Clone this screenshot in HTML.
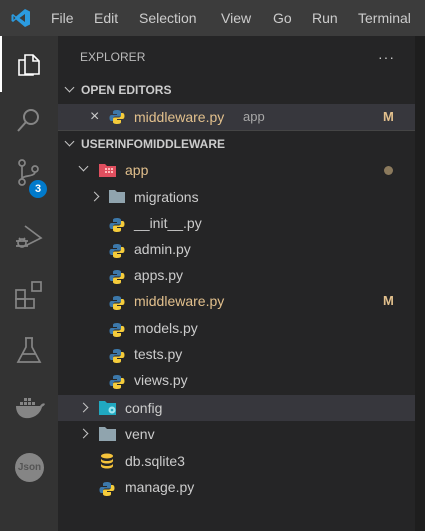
<!DOCTYPE html>
<html><head><meta charset="utf-8"><style>
*{margin:0;padding:0;box-sizing:border-box}
body{width:425px;height:531px;background:#1e1e1e;font-family:"Liberation Sans",sans-serif;overflow:hidden;position:relative;color:#ccc}
#title{position:absolute;left:0;top:0;width:425px;height:36px;background:#3c3c3c}
#title span{position:absolute;top:10px;font-size:14px;color:#cccccc}
#act{position:absolute;left:0;top:36px;width:58px;height:495px;background:#333333}
#side{position:absolute;left:58px;top:36px;width:357px;height:495px;background:#252526}
.row{position:absolute;left:58px;width:357px;height:26px;font-size:14px;line-height:26px;white-space:nowrap}
.hdr{font-size:12px;font-weight:bold;color:#cccccc}
.sel{background:#37373d}
.mod{color:#e2c08d}
.ic{position:absolute;top:5px}
.chev{position:absolute;top:8px;width:7px;height:7px;border-right:1.5px solid #c5c5c5;border-bottom:1.5px solid #c5c5c5}
.down{transform:rotate(45deg)}
.right{transform:rotate(-45deg)}
.badgeM{position:absolute;left:325px;font-weight:bold;color:#e2c08d;font-size:13px}
.t{position:absolute}
svg.act{position:absolute;left:15px}
</style></head><body>
<div id="title">
<svg style="position:absolute;left:11px;top:8px" width="20" height="20" viewBox="0 0 20 20"><path d="M14 1 L19 3.5 V16.5 L14 19 L5 11.5 L2 14 L0.5 13 V7 L2 6 L5 8.5 Z M14 6 L8.5 10 L14 14 Z M2.5 8 V12 L4.5 10 Z" fill="#2b9be0" fill-rule="evenodd"/></svg>
<span style="left:51px">File</span><span style="left:94px">Edit</span><span style="left:139px">Selection</span><span style="left:221px">View</span><span style="left:273px">Go</span><span style="left:312px">Run</span><span style="left:358px">Terminal</span>
</div>
<div id="act">
<div style="position:absolute;left:0;top:0;width:2px;height:56px;background:#fff"></div>
<svg class="act" style="top:14px" width="28" height="28" viewBox="0 0 28 28" fill="none" stroke="#fff" stroke-width="1.6"><path d="M10 5h8l6 6v13H10z"/><path d="M18 5v6h6"/><path d="M10 10H4v15h14v-1"/></svg>
<svg class="act" style="top:70px" width="28" height="28" viewBox="0 0 28 28" fill="none" stroke="#858585" stroke-width="2"><circle cx="16" cy="11" r="7"/><path d="M11 16L3 25"/></svg>
<svg class="act" style="top:122px" width="28" height="30" viewBox="0 0 28 30" fill="none" stroke="#858585" stroke-width="1.7"><circle cx="7" cy="5" r="3"/><circle cx="7" cy="24" r="3"/><circle cx="20" cy="11" r="3"/><path d="M7 8v13M20 14c0 5-13 3-13 7"/></svg>
<div style="position:absolute;left:29px;top:144px;width:18px;height:18px;border-radius:9px;background:#007acc;color:#fff;font-size:11px;font-weight:bold;text-align:center;line-height:18px">3</div>
<svg class="act" style="top:186px" width="30" height="30" viewBox="0 0 30 30" fill="none" stroke="#858585" stroke-width="1.7"><path d="M10 4l16 12-16 8"/><circle cx="7" cy="21" r="4"/><path d="M1 19h12M1 24h12M4 16l2 2M10 16l-2 2"/></svg>
<svg class="act" style="top:244px" width="30" height="30" viewBox="0 0 30 30" fill="none" stroke="#858585" stroke-width="1.7"><rect x="1" y="10" width="9" height="9"/><rect x="1" y="19" width="9" height="9"/><rect x="10" y="19" width="9" height="9"/><rect x="17" y="2" width="9" height="9"/></svg>
<svg class="act" style="top:300px" width="28" height="28" viewBox="0 0 28 28" fill="none" stroke="#858585" stroke-width="1.7"><path d="M10 2h8M11 2v9L3 26h22L17 11V2M7 18h14"/></svg>
<svg class="act" style="top:360px" width="30" height="24" viewBox="0 0 30 24"><path d="M1 10h24c2-3 4-3 5-2-1 2-2 2-3 3-2 8-10 12-17 11C4 21 1 16 1 10z" fill="#858585"/><g fill="#858585"><rect x="5" y="6" width="3" height="3"/><rect x="9" y="6" width="3" height="3"/><rect x="13" y="6" width="3" height="3"/><rect x="9" y="2" width="3" height="3"/><rect x="13" y="2" width="3" height="3"/><rect x="17" y="6" width="3" height="3"/></g></svg>
<div style="position:absolute;left:15px;top:417px;width:29px;height:29px;border-radius:50%;background:#858585;color:#555;font-size:10px;font-weight:bold;text-align:center;line-height:29px">Json</div>
</div>
<div id="side">
<div style="position:absolute;left:22px;top:14px;font-size:12px;color:#bbbbbb">EXPLORER</div>
<div style="position:absolute;left:320px;top:16px;font-size:14px;color:#ccc;letter-spacing:1px;line-height:10px">···</div>
</div>

<div class="row hdr" style="top:77px"><div class="chev down" style="left:8px;top:7px"></div><span class="t" style="left:23px">OPEN EDITORS</span></div>
<div class="row sel" style="top:104px;height:27px;border-bottom:1px solid #454545">
<span class="t" style="left:32px;font-size:16px;color:#ccc">×</span>
<svg class="ic" style="left:51px" width="16" height="16" viewBox="0 0 16 16"><path d="M8 1C4 1 4 2.5 4 3v2h4v1H2.5C1 6 0.5 7.5 0.5 9s.5 3 2 3H4v-2c0-1.5 1-2.5 2.5-2.5h4C11.5 7.5 12 7 12 6V3c0-1.5-2-2-4-2z" fill="#3c78aa"/><path d="M8 15c4 0 4-1.5 4-2v-2H8v-1h5.5c1.5 0 2-1.5 2-3s-.5-3-2-3H12v2c0 1.5-1 2.5-2.5 2.5h-4C4.5 8.5 4 9 4 10v3c0 1.5 2 2 4 2z" fill="#f5cc3b"/></svg>
<span class="t mod" style="left:76px">middleware.py</span><span class="t" style="left:185px;font-size:13px;color:#a8a8a8">app</span><span class="badgeM">M</span></div>
<div class="row hdr" style="top:131px"><div class="chev down" style="left:8px;top:7px"></div><span class="t" style="left:23px">USERINFOMIDDLEWARE</span></div>
<div class="row" style="top:157px"><div class="chev down" style="left:22px;top:6px"></div><svg class="ic" style="left:41px;top:6px" width="17" height="14" viewBox="0 0 17 14"><path d="M0 1h6l2 2h9v11H0z" fill="#e04f5f"/><g fill="#fbb"><rect x="6" y="5" width="2" height="2"/><rect x="9" y="5" width="2" height="2"/><rect x="12" y="5" width="2" height="2"/><rect x="6" y="8" width="2" height="2"/><rect x="9" y="8" width="2" height="2"/><rect x="12" y="8" width="2" height="2"/></g></svg><span class="t mod" style="left:67px">app</span><span class="t" style="left:326px;top:9px;width:9px;height:9px;border-radius:50%;background:#8b7a5d"></span></div>
<div class="row" style="top:184px"><div class="chev right" style="left:33px;top:9px"></div><svg class="ic" style="left:51px;top:6px" width="16" height="13" viewBox="0 0 16 13"><path d="M0 0h6l2 2h8v11H0z" fill="#90a4ae"/></svg><span class="t" style="left:76px">migrations</span></div>
<div class="row sel" style="top:395px"><div class="chev right" style="left:22px;top:9px"></div><svg class="ic" style="left:41px;top:6px" width="18" height="14" viewBox="0 0 18 14"><path d="M0 0h6l2 2h9v12H0z" fill="#20a8c0"/><circle cx="13" cy="9" r="3.5" fill="#9fe6f0"/><circle cx="13" cy="9" r="1.3" fill="#20a8c0"/></svg><span class="t" style="left:67px">config</span></div>
<div class="row" style="top:421px"><div class="chev right" style="left:22px;top:9px"></div><svg class="ic" style="left:41px;top:6px" width="17" height="14" viewBox="0 0 17 14"><path d="M0 0h6l2 2h9v12H0z" fill="#90a4ae"/></svg><span class="t" style="left:67px">venv</span></div>
<div class="row" style="top:448px"><svg class="ic" style="left:42px;top:5px" width="14" height="16" viewBox="0 0 14 16"><ellipse cx="7" cy="3" rx="6" ry="2.5" fill="#f5c33b"/><path d="M1 5.5c0 1.5 3 2.5 6 2.5s6-1 6-2.5V8c0 1.5-3 2.5-6 2.5S1 9.5 1 8z" fill="#f5c33b"/><path d="M1 10.5c0 1.5 3 2.5 6 2.5s6-1 6-2.5V13c0 1.5-3 2.5-6 2.5S1 14.5 1 13z" fill="#f5c33b"/></svg><span class="t" style="left:67px">db.sqlite3</span></div>
<script>
var py='<svg width="16" height="16" viewBox="0 0 16 16"><path d="M8 1C4 1 4 2.5 4 3v2h4v1H2.5C1 6 0.5 7.5 0.5 9s.5 3 2 3H4v-2c0-1.5 1-2.5 2.5-2.5h4C11.5 7.5 12 7 12 6V3c0-1.5-2-2-4-2z" fill="#3c78aa"/><path d="M8 15c4 0 4-1.5 4-2v-2H8v-1h5.5c1.5 0 2-1.5 2-3s-.5-3-2-3H12v2c0 1.5-1 2.5-2.5 2.5h-4C4.5 8.5 4 9 4 10v3c0 1.5 2 2 4 2z" fill="#f5cc3b"/></svg>';
var f=[["__init__.py",210,0,51,76],["admin.py",236,0,51,76],["apps.py",262,0,51,76],["middleware.py",288,1,51,76],["models.py",315,0,51,76],["tests.py",341,0,51,76],["views.py",367,0,51,76],["manage.py",474,0,41,67]];
var h='';
f.forEach(function(x){h+='<div class="row" style="top:'+x[1]+'px"><span class="ic" style="left:'+x[3]+'px">'+py+'</span><span class="t '+(x[2]?'mod':'')+'" style="left:'+x[4]+'px">'+x[0]+'</span>'+(x[2]?'<span class="badgeM">M</span>':'')+'</div>';});
document.body.insertAdjacentHTML('beforeend',h);
</script>
</body></html>
